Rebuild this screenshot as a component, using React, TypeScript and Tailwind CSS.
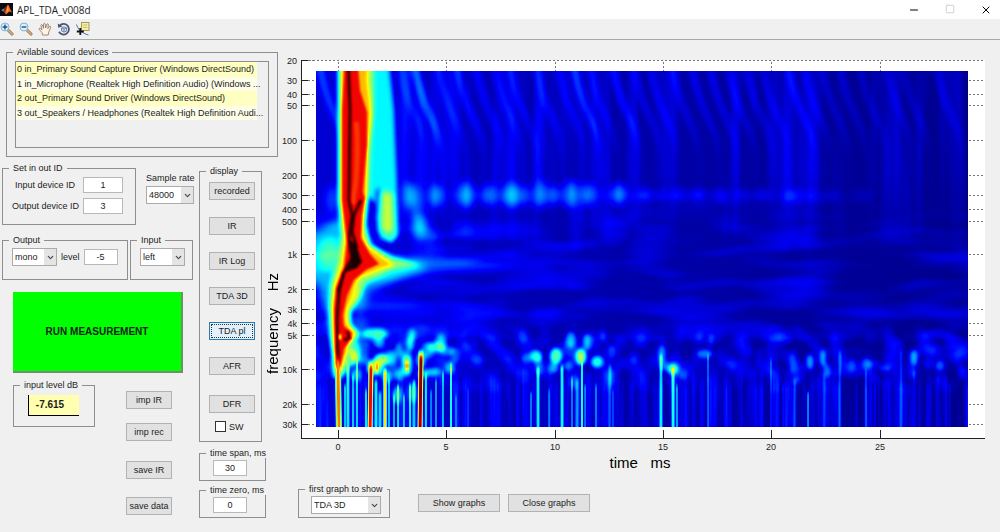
import { useState } from 'react'
import type { ReactNode } from 'react'
import { ChevronDown, Minus, Square, X } from 'lucide-react'

const devices = [
  '0 in_Primary Sound Capture Driver (Windows DirectSound)',
  '1 in_Microphone (Realtek High Definition Audio) (Windows ...',
  '2 out_Primary Sound Driver (Windows DirectSound)',
  '3 out_Speakers / Headphones (Realtek High Definition Audi...',
]

const displayModes = ['recorded', 'IR', 'IR Log', 'TDA 3D', 'TDA pl', 'AFR']

const yTicks: [string, number][] = [
  ['20', 60], ['30', 80], ['40', 94], ['50', 105], ['100', 140], ['200', 175],
  ['300', 195], ['400', 209], ['500', 221], ['1k', 254], ['2k', 289], ['3k', 309],
  ['4k', 323], ['5k', 335], ['10k', 369], ['20k', 404], ['30k', 424],
]

const xTicks: [string, number][] = [
  ['0', 338], ['5', 446], ['10', 555], ['15', 663], ['20', 771], ['25', 880],
]

// Energy streaks that start at the top of the plot: x, strength
const streaks: [number, number][] = [
  [322, 0.12], [402, 0.07], [417, 0.18], [440, 0.08], [459, 0.1], [478, 0.08], [497, 0.08], [512, 0.08],
  [538, 0.08], [560, 0.07], [576, 0.13], [592, 0.07], [615, 0.11], [636, 0.07], [652, 0.07],
  [674, 0.07], [694, 0.08], [712, 0.08], [730, 0.07], [748, 0.07], [764, 0.06], [790, 0.09],
  [806, 0.06], [824, 0.06], [842, 0.06], [862, 0.05], [888, 0.05], [905, 0.05], [938, 0.06],
]

type Spot = [number, number, number, number, number]

// Wide soft spots below 4k: x, y, rx, ry, strength
const lowSpots: Spot[] = [
  // 300 Hz row
  [409, 195, 5, 13, 0.26], [436, 196, 6, 11, 0.24], [466, 195, 7, 13, 0.24], [489, 195, 7, 11, 0.16],
  [512, 195, 9, 12, 0.22], [527, 195, 4, 10, 0.12], [541, 194, 4, 14, 0.23], [554, 195, 6, 10, 0.15],
  [571, 194, 5, 14, 0.24], [588, 194, 6, 11, 0.19], [619, 194, 6, 11, 0.23], [645, 195, 6, 7, 0.13],
  [662, 195, 5, 6, 0.08], [678, 195, 8, 6, 0.1], [698, 195, 8, 6, 0.12], [720, 195, 7, 6, 0.1],
  [742, 195, 8, 5, 0.08], [762, 195, 8, 5, 0.09], [792, 196, 9, 6, 0.11], [812, 196, 8, 5, 0.07],
  [832, 196, 8, 5, 0.06], [862, 196, 12, 5, 0.05], [550, 196, 110, 7, 0.05], [740, 196, 110, 4, 0.03],
  [420, 228, 7, 12, 0.3], [432, 236, 7, 6, 0.14], [416, 205, 6, 18, 0.14], [464, 228, 10, 7, 0.08],
  [428, 252, 18, 5, 0.08], [332, 200, 6, 14, 0.13], [614, 232, 14, 12, 0.06], [655, 232, 18, 8, 0.05],
  [793, 150, 6, 90, 0.05], [576, 215, 6, 35, 0.06], [541, 150, 4, 60, 0.05], [420, 150, 5, 70, 0.08],
  [540, 255, 45, 4, 0.04], [575, 283, 14, 5, 0.05], [545, 314, 18, 4, 0.09], [400, 310, 40, 4, 0.07],
  [440, 314, 40, 5, 0.05], [360, 325, 9, 10, 0.12], [358, 300, 8, 12, 0.2],
]

// Scatter between 4k and 12k
const highSpots: Spot[] = [
  [523, 335, 5, 7, 0.08],
  [375, 334, 13, 5, 0.32], [379, 342, 5, 6, 0.2], [350, 357, 8, 9, 0.35], [355, 352, 6, 11, 0.28],
  [344, 366, 5, 8, 0.3], [366, 350, 4, 8, 0.12], [381, 360, 7, 6, 0.48], [376, 368, 7, 7, 0.42],
  [371, 367, 4, 7, 0.35], [391, 358, 6, 7, 0.22], [399, 350, 4, 7, 0.2], [406, 357, 6, 7, 0.24],
  [407, 366, 5, 10, 0.38], [410, 344, 4, 7, 0.34], [412, 335, 4, 6, 0.28], [421, 360, 4, 8, 0.3],
  [399, 375, 5, 6, 0.22], [397, 395, 4, 9, 0.3], [413, 393, 4, 10, 0.24], [428, 350, 6, 8, 0.22],
  [436, 347, 8, 5, 0.28], [441, 343, 5, 9, 0.22], [447, 351, 7, 5, 0.2], [450, 368, 5, 6, 0.24],
  [433, 372, 8, 4, 0.26], [423, 374, 6, 4, 0.22], [455, 355, 5, 8, 0.16], [387, 377, 5, 6, 0.25],
  [357, 375, 5, 6, 0.2], [364, 360, 5, 4, 0.16], [470, 345, 8, 5, 0.06], [478, 360, 6, 6, 0.06],
  // 10 ms group
  [536, 356, 6, 6, 0.36], [539, 366, 4, 10, 0.2], [526, 358, 5, 5, 0.18], [556, 356, 6, 8, 0.42],
  [554, 368, 5, 5, 0.22], [571, 340, 5, 8, 0.26], [568, 366, 5, 5, 0.2], [581, 357, 5, 8, 0.5],
  [587, 342, 4, 8, 0.24], [597, 362, 6, 6, 0.38], [603, 336, 3, 6, 0.16], [612, 352, 5, 7, 0.14],
  [574, 382, 4, 8, 0.15], [611, 378, 4, 9, 0.12], [634, 358, 5, 6, 0.1],
  // 15 ms group and tail
  [662, 354, 4, 9, 0.24], [673, 369, 5, 5, 0.4], [683, 376, 5, 5, 0.1], [664, 366, 5, 5, 0.16],
  [705, 354, 8, 5, 0.22], [711, 340, 3, 6, 0.16], [700, 338, 4, 6, 0.08], [760, 358, 5, 10, 0.06],
  [732, 363, 5, 8, 0.06], [771, 350, 5, 14, 0.07], [783, 338, 9, 6, 0.09], [793, 362, 4, 12, 0.12],
  [797, 380, 5, 4, 0.14], [810, 362, 4, 8, 0.27], [823, 358, 3, 9, 0.27], [827, 370, 4, 7, 0.16],
  [833, 340, 5, 6, 0.07], [852, 365, 4, 7, 0.13], [867, 363, 5, 6, 0.16], [873, 364, 6, 4, 0.1],
  [885, 368, 6, 4, 0.15], [899, 350, 6, 12, 0.05], [914, 358, 4, 8, 0.26], [912, 372, 4, 6, 0.08],
  [928, 364, 4, 5, 0.1], [940, 366, 5, 6, 0.18], [936, 334, 14, 5, 0.08], [950, 342, 6, 8, 0.07],
  [962, 372, 4, 6, 0.09],
]

// Narrow high frequency lines: x, y start, width, strength
const combs: [number, number, number, number][] = [
  [348, 365, 2, 0.3], [353, 375, 1, 0.2], [357, 360, 1, 0.26], [345, 385, 1, 0.25],
  [366, 390, 1, 0.25], [376, 380, 2, 0.3], [380, 392, 2, 0.26], [389, 380, 1, 0.22],
  [394, 395, 1, 0.24], [398, 385, 1, 0.26], [404, 395, 1, 0.24], [410, 385, 1, 0.28],
  [414, 380, 2, 0.28], [426, 375, 1, 0.24], [431, 390, 1, 0.18], [436, 380, 1, 0.22],
  [443, 372, 1, 0.24], [451, 365, 1, 0.34], [456, 395, 1, 0.12], [468, 390, 1, 0.08],
  [531, 392, 1, 0.2], [538, 368, 2, 0.32], [549, 390, 1, 0.13], [562, 366, 2, 0.34],
  [572, 378, 1, 0.2], [577, 380, 2, 0.16], [582, 362, 1, 0.32], [585, 385, 1, 0.18],
  [596, 385, 1, 0.14], [610, 365, 2, 0.13], [613, 390, 1, 0.12], [661, 355, 2, 0.28],
  [673, 368, 2, 0.34], [677, 385, 1, 0.18], [708, 355, 1, 0.16], [771, 360, 1, 0.1],
  [783, 385, 1, 0.08], [795, 380, 2, 0.11], [808, 392, 1, 0.22], [824, 375, 2, 0.07],
  [840, 352, 2, 0.11], [866, 370, 1, 0.08], [875, 385, 1, 0.08], [901, 350, 2, 0.09],
  [914, 370, 2, 0.09], [938, 375, 2, 0.07], [950, 385, 1, 0.06],
]

const grey = (level: number) => `rgb(${level}, ${level}, ${level})`

function Spectrogram() {
  return (
    <svg viewBox="280 50 720 428" className="block w-full" role="img" aria-label="TDA plot">
      <defs>
        <clipPath id="plot">
          <rect x="316" y="71" width="652" height="356" />
        </clipPath>
        {/* grey level to jet colours, the top of the scale falls to black */}
        <filter id="jet" filterUnits="userSpaceOnUse" x="300" y="60" width="690" height="380" colorInterpolationFilters="sRGB">
          <feComponentTransfer>
            <feFuncR type="table" tableValues="0 0 0 0 .5 1 1 .95 .1" />
            <feFuncG type="table" tableValues="0 0 .5 1 1 1 .45 0 0" />
            <feFuncB type="table" tableValues=".5 1 1 1 .5 0 0 0 0" />
          </feComponentTransfer>
        </filter>
        <filter id="soft1" filterUnits="userSpaceOnUse" x="280" y="40" width="720" height="420" colorInterpolationFilters="sRGB">
          <feGaussianBlur stdDeviation="1" />
        </filter>
        <filter id="soft2" filterUnits="userSpaceOnUse" x="280" y="40" width="720" height="420" colorInterpolationFilters="sRGB">
          <feGaussianBlur stdDeviation="2" />
        </filter>
        <filter id="soft4" filterUnits="userSpaceOnUse" x="280" y="40" width="720" height="420" colorInterpolationFilters="sRGB">
          <feGaussianBlur stdDeviation="4" />
        </filter>
        <filter id="line" filterUnits="userSpaceOnUse" x="280" y="40" width="720" height="420" colorInterpolationFilters="sRGB">
          <feGaussianBlur stdDeviation="0.6 2" />
        </filter>
        <filter id="clouds" filterUnits="userSpaceOnUse" x="316" y="190" width="652" height="200" colorInterpolationFilters="sRGB">
          <feTurbulence type="fractalNoise" baseFrequency="0.012 0.05" numOctaves="2" seed="4" />
          <feColorMatrix values="0 0 0 0 1  0 0 0 0 1  0 0 0 0 1  .24 0 0 0 -.1" />
        </filter>
        <filter id="columns" filterUnits="userSpaceOnUse" x="316" y="71" width="652" height="200" colorInterpolationFilters="sRGB">
          <feTurbulence type="fractalNoise" baseFrequency="0.06 0.003" numOctaves="2" seed="9" />
          <feColorMatrix values="0 0 0 0 1  0 0 0 0 1  0 0 0 0 1  .18 0 0 0 -.075" />
        </filter>
        <filter id="grain" filterUnits="userSpaceOnUse" x="316" y="320" width="652" height="76" colorInterpolationFilters="sRGB">
          <feTurbulence type="fractalNoise" baseFrequency="0.06 0.05" numOctaves="1" seed="3" />
          <feColorMatrix values="0 0 0 0 1  0 0 0 0 1  0 0 0 0 1  .34 0 0 0 -.14" />
        </filter>
        <filter id="comb" filterUnits="userSpaceOnUse" x="316" y="365" width="652" height="62" colorInterpolationFilters="sRGB">
          <feTurbulence type="fractalNoise" baseFrequency="0.2 0.004" numOctaves="2" seed="7" />
          <feColorMatrix values="0 0 0 0 1  0 0 0 0 1  0 0 0 0 1  .28 0 0 0 -.1" />
        </filter>
        <linearGradient id="fade" x1="0" x2="1" y1="0" y2="0">
          <stop offset="0" stopColor="#fff" stopOpacity=".07" />
          <stop offset=".35" stopColor="#fff" stopOpacity=".035" />
          <stop offset="1" stopColor="#fff" stopOpacity="0" />
        </linearGradient>
        <linearGradient id="streak" gradientUnits="userSpaceOnUse" x1="0" x2="0" y1="71" y2="240">
          <stop offset="0" stopColor="#fff" />
          <stop offset=".3" stopColor="#fff" stopOpacity=".7" />
          <stop offset=".5" stopColor="#fff" stopOpacity=".2" />
          <stop offset="1" stopColor="#fff" stopOpacity="0" />
        </linearGradient>
        <linearGradient id="band" x1="0" x2="0" y1="0" y2="1">
          <stop offset="0" stopColor="#000" />
          <stop offset=".25" stopColor="#fff" />
          <stop offset=".7" stopColor="#fff" />
          <stop offset="1" stopColor="#000" />
        </linearGradient>
        <linearGradient id="rise" x1="0" x2="0" y1="0" y2="1">
          <stop offset="0" stopColor="#000" />
          <stop offset=".4" stopColor="#fff" />
        </linearGradient>
        <linearGradient id="fall" x1="0" x2="0" y1="0" y2="1">
          <stop offset=".5" stopColor="#fff" />
          <stop offset="1" stopColor="#000" />
        </linearGradient>
        <mask id="clouds-mask"><rect x="316" y="190" width="652" height="200" fill="url(#band)" /></mask>
        <mask id="grain-mask"><rect x="316" y="320" width="652" height="76" fill="url(#band)" /></mask>
        <mask id="comb-mask"><rect x="316" y="365" width="652" height="62" fill="url(#rise)" /></mask>
        <mask id="columns-mask"><rect x="316" y="71" width="652" height="200" fill="url(#fall)" /></mask>
      </defs>

      <rect x="301" y="60" width="684" height="378" fill="#fff" />

      <g clipPath="url(#plot)">
        <g filter="url(#jet)">
          <rect x="300" y="60" width="690" height="380" fill={grey(4)} />
          <rect x="316" y="71" width="652" height="356" fill="url(#fade)" />
          <g mask="url(#columns-mask)"><rect x="316" y="71" width="652" height="200" filter="url(#columns)" /></g>
          <g mask="url(#clouds-mask)"><rect x="316" y="190" width="652" height="200" filter="url(#clouds)" /></g>
          <g mask="url(#grain-mask)"><rect x="316" y="320" width="652" height="76" filter="url(#grain)" /></g>
          <g mask="url(#comb-mask)"><rect x="316" y="365" width="652" height="62" filter="url(#comb)" /></g>

          <g filter="url(#soft2)" fill="none" stroke="url(#streak)" strokeWidth="8">
            {streaks.map(([x, strength]) => (
              <path
                key={x}
                d={`M${x - 4} 55 C${x} 80 ${x + 4} 98 ${x + 14} 118 S${x + 26} 150 ${x + 27} 220`}
                strokeOpacity={strength}
              />
            ))}
          </g>

          {/* second arrival, next to the main ridge */}
          <g filter="url(#soft2)">
            <path d="M368 55 L388 55 L394 110 L397 180 L398 235 L392 243 L380 238 L376 205 L368 195Z" fill={grey(94)} />
            <path d="M376 195 L386 188 L396 195 L398 236 L390 242 L378 232Z" fill={grey(110)} />
            <path d="M383 192 L391 194 L393 228 L387 234 L382 226Z" fill={grey(145)} />
            <path d="M376 190 L380 188 L378 215 L374 225Z" fill={grey(45)} />
          </g>

          {/* glow before the arrival at 1k */}
          <g filter="url(#soft4)" fill="#fff">
            <path d="M308 235 L345 215 L345 340 L334 345 L326 310 L318 285 L305 280Z" fillOpacity=".24" />
            <ellipse cx="329" cy="254" rx="12" ry="16" fillOpacity=".2" />
            <path d="M355 252 L440 259 L560 266 L440 271 L355 285Z" fillOpacity=".17" />
            <path d="M350 255 L425 263 L425 269 L350 300Z" fillOpacity=".2" />
          </g>

          <g filter="url(#soft2)">
            <path
              d="M338 55 L374 55 L374 100 L371 150 L369 195 L366 225 L371 244 L392 257 L420 265 L392 270 L366 283 L358 300 L351 312 L351 324 L360 334 L352 345 L344 360 L342 378 L334 378 L331 345 L329 310 L330 285 L336 262 L341 235 L338 200Z"
              fill={grey(130)}
            />
            <path
              d="M341 55 L370 55 L368 80 L372 115 L368 150 L368 193 L365 205 L363 235 L368 246 L384 258 L395 265 L382 269 L360 278 L354 290 L348 308 L347 322 L356 334 L348 345 L343 360 L340 375 L335 370 L333 340 L332 305 L334 285 L341 265 L344 240 L341 205Z"
              fill={grey(175)}
            />
          </g>
          <g filter="url(#soft1)">
            <path
              d="M345 55 L357 55 L360 90 L367 112 L367 145 L363 192 L365 198 L362 215 L361 238 L370 254 L379 264 L366 270 L354 280 L347 296 L343 315 L344 326 L352 333 L349 342 L344 349 L341 362 L338 374 L335 350 L334 310 L336 288 L344 268 L347 242 L342 200 L342 110Z"
              fill={grey(222)}
            />
            <path d="M356 122 C358 135 358 150 356 180 C355 192 352 200 354 204" fill="none" stroke={grey(208)} strokeWidth="5" />
            <path
              d="M348 55 L350 110 L349 200 L352 215 L349 240 L352 258 L344 272 L339 292 L337 320 L338 372"
              fill="none"
              stroke={grey(252)}
              strokeWidth="3"
            />
            <path d="M361 200 L354 215 L352 232 L357 248" fill="none" stroke={grey(252)} strokeWidth="3" />
            <path d="M350 240 L356 244 L362 262 L357 268 L346 272 L342 282 L339 300 L337 290 L342 272 L351 264Z" fill={grey(255)} />
            <path d="M347 331 L350 338 L344 340" fill="none" stroke={grey(250)} strokeWidth="3" />
            <ellipse cx="340" cy="337" rx="1" ry="3" fill={grey(110)} />
          </g>

          <g filter="url(#soft4)" fill="#fff">
            {lowSpots.map(([x, y, rx, ry, strength]) => (
              <ellipse key={`${x}-${y}`} cx={x} cy={y} rx={rx} ry={ry} fillOpacity={strength} />
            ))}
          </g>
          <g filter="url(#soft2)" fill="#fff">
            {highSpots.map(([x, y, rx, ry, strength]) => (
              <ellipse key={`${x}-${y}`} cx={x} cy={y} rx={rx} ry={ry} fillOpacity={strength} />
            ))}
          </g>

          <g filter="url(#line)" stroke="#fff">
            {combs.map(([x, y, width, strength]) => (
              <line key={x} x1={x} x2={x} y1={y} y2="435" strokeWidth={width + 1} strokeOpacity={strength} />
            ))}
          </g>
          <g filter="url(#line)">
            <path d="M338 368 L339 435" stroke={grey(125)} strokeWidth="6" />
            <path d="M338 360 L339 435" stroke={grey(190)} strokeWidth="3" />
            <path d="M371 364 L370 435" stroke={grey(140)} strokeWidth="5" />
            <path d="M371 366 L370 435" stroke={grey(222)} strokeWidth="3" />
            <path d="M385 370 L385 435" stroke={grey(165)} strokeWidth="3" />
            <path d="M421 352 L420 435" stroke={grey(150)} strokeWidth="5" />
            <path d="M421 356 L420 435" stroke={grey(238)} strokeWidth="3" />
            <path d="M407 362 L407 370" stroke={grey(180)} strokeWidth="4" />
            <path d="M377 364 L377 371" stroke={grey(185)} strokeWidth="3" />
          </g>
        </g>
      </g>

      {/* axes and grid */}
      <g stroke="#222" fill="none" shapeRendering="crispEdges">
        <path d="M301 60 V438 H985" />
        <path d="M301 60 H985" strokeDasharray="2 2" stroke="#777" />
        {yTicks.map(([label, y]) => (
          <g key={label}>
            <path d={`M301 ${y} H308`} />
            <path d={`M308 ${y} H314`} strokeDasharray="2 2" stroke="#777" />
            <path d={`M969 ${y} H985`} strokeDasharray="2 2" stroke="#777" />
          </g>
        ))}
        {xTicks.map(([label, x]) => (
          <g key={label}>
            <path d={`M${x} 430 V438`} />
            <path d={`M${x} 62 V71`} strokeDasharray="2 2" stroke="#777" />
          </g>
        ))}
      </g>
      <g fill="#222" fontSize="9">
        {yTicks.map(([label, y]) => (
          <text key={label} x="297" y={y + 4} textAnchor="end">{label}</text>
        ))}
        {xTicks.map(([label, x]) => (
          <text key={label} x={x} y="450" textAnchor="middle">{label}</text>
        ))}
      </g>
      <text x="640" y="468" fontSize="15" textAnchor="middle" className="whitespace-pre">{'time   ms'}</text>
    </svg>
  )
}

function Panel({ title, className, children }: { title: string; className: string; children: ReactNode }) {
  return (
    <fieldset className={`min-w-0 border border-[#8e8e8e] ${className}`}>
      <legend className="ml-[6px] px-1 leading-[10px] whitespace-nowrap">{title}</legend>
      {children}
    </fieldset>
  )
}

function PushButton({ children, active, className = 'w-[46px]', onClick }: {
  children: ReactNode
  active?: boolean
  className?: string
  onClick?: () => void
}) {
  return (
    <button
      onClick={onClick}
      className={`h-[18px] border text-center whitespace-nowrap ${className} ${
        active
          ? 'border-[#2a7ab0] bg-[#e1f0fa] outline-1 -outline-offset-3 outline-dotted outline-[#333]'
          : 'border-[#b2b2b2] bg-[#e1e1e1]'
      }`}
    >
      {children}
    </button>
  )
}

function DropDown({ label, options, className }: { label: string; options: string[]; className: string }) {
  return (
    <span className={`relative block h-[18px] border border-[#ababab] bg-white ${className}`}>
      <select aria-label={label} className="block h-4 w-full appearance-none bg-transparent pl-[2px] leading-4">
        {options.map((option) => (
          <option key={option}>{option}</option>
        ))}
      </select>
      <span className="pointer-events-none absolute inset-y-0 right-0 flex w-3 items-center justify-center bg-[#e4e4e4]">
        <ChevronDown className="h-[9px] w-[9px] text-[#444]" strokeWidth={3} />
      </span>
    </span>
  )
}

function NumberField({ label, value, className }: { label: string; value: string; className: string }) {
  return (
    <input
      aria-label={label}
      defaultValue={value}
      className={`block h-4 border border-[#b8b8b8] bg-white text-center ${className}`}
    />
  )
}

function Magnifier({ plus }: { plus?: boolean }) {
  return (
    <svg viewBox="0 0 14 14" className="h-[14px] w-[14px]">
      <path d="M8 8 L12 12" stroke="#8a6a4a" strokeWidth="3" strokeLinecap="round" />
      <path d="M8 8 L12 12" stroke="#e3b27c" strokeWidth="1.6" strokeLinecap="round" />
      <circle cx="5" cy="5" r="4" fill="#d8f0fb" stroke="#86b4d2" />
      <path d={plus ? 'M2.6 5 H7.4 M5 2.6 V7.4' : 'M2.6 5 H7.4'} stroke="#1d4f90" strokeWidth="1.4" />
    </svg>
  )
}

function Toolbar() {
  return (
    <div className="flex h-[21px] items-center gap-[5px] border-b border-[#a8a8a8] bg-[#f0f0f0]">
      <button aria-label="Zoom in"><Magnifier plus /></button>
      <button aria-label="Zoom out"><Magnifier /></button>
      <button aria-label="Pan">
        <svg viewBox="0 0 14 14" className="h-[14px] w-[14px]">
          <path
            d="M4.5 13 L4 10.5 L1 7.3 Q.8 6 2.2 6.4 L4 7.8 L2.8 3.2 Q3.4 2 4.3 3 L5.6 6.2 L5.5 1.8 Q6.4 .6 7.2 1.8 L7.6 6 L9 2 Q10 1.3 10.4 2.5 L9.8 6.6 L11.6 4.4 Q12.8 4 12.7 5.3 L10.8 10 L10.2 13Z"
            fill="#fff3e4"
            stroke="#8b6f5c"
            strokeWidth=".8"
          />
        </svg>
      </button>
      <button aria-label="Rotate 3D">
        <svg viewBox="0 0 14 14" className="h-[14px] w-[14px]" fill="none">
          <path d="M2.6 3.8 A5.3 5.3 0 1 1 2 9.8" stroke="#4a5672" strokeWidth="1.8" />
          <path d="M.8 1.4 L1.2 5.8 L5.4 4.6Z" fill="#4a5672" />
          <path d="M4.6 6 L7 4.8 L9.6 6 V9 L7 10.2 L4.6 9Z M4.6 6 L7 7 L9.6 6 M7 7 V10" fill="#d5e2f5" stroke="#536a9b" strokeWidth=".8" />
        </svg>
      </button>
      <button aria-label="Data cursor">
        <svg viewBox="0 0 14 14" className="h-[14px] w-[14px]" fill="none">
          <rect x="5.5" y=".5" width="7.5" height="8" fill="#f4efaa" stroke="#a59b53" />
          <path d="M7.2 3 H11.2 M7.2 5.4 H11.2" stroke="#b9ad64" strokeWidth=".8" />
          <path d="M.5 2.5 C2 7 5 11 12.5 13" stroke="#496fad" />
          <path d="M4.3 6 V13 M.8 9.5 H7.8" stroke="#111" strokeWidth="1.8" />
        </svg>
      </button>
    </div>
  )
}

function TitleBar() {
  return (
    <header className="flex h-[19px] items-center bg-white font-['Open_Sans','Noto_Sans',sans-serif]">
      <svg viewBox="0 0 13 13" className="h-[13px] w-[13px]">
        <rect width="13" height="13" fill="#0b0b12" />
        <path d="M1 7 L4 5.5 L5.5 7 L3.6 8.8Z" fill="#4e8fc4" />
        <path d="M4 5.5 L8 1.5 L6.5 8 L5 10.5 L3.6 8.8Z" fill="#8f2a13" />
        <path d="M8 1.5 Q9 2 9.7 5 L12 9.5 L9.4 8.5 L6 11.5 L5 10Z" fill="#ee6c25" />
        <path d="M8 1.5 L8.3 7 L6.6 9.3Z" fill="#fbc35b" />
      </svg>
      <h1 className="ml-1 flex-1 text-[10px] leading-none text-[#222]">APL_TDA_v008d</h1>
      <div className="flex gap-2">
        <button aria-label="Minimize" className="flex w-7 justify-center"><Minus className="h-3 w-3 text-black" /></button>
        <button aria-label="Maximize" className="flex w-7 justify-center"><Square className="h-[10px] w-[10px] text-[#c8c8c8]" /></button>
        <button aria-label="Close" className="flex w-7 justify-center"><X className="h-3 w-3 text-black" /></button>
      </div>
    </header>
  )
}

export default function App() {
  const [mode, setMode] = useState('TDA pl')

  return (
    <div className="min-h-screen bg-[#f0f0f0] font-['Liberation_Sans',Arial,sans-serif] text-[9px] leading-[10px] text-[#1c1c1c]">
      <TitleBar />
      <Toolbar />

      <main className="flex items-start">
        <div className="w-[280px] shrink-0 pt-[7px]">
          <Panel title="Avilable sound devices" className="ml-[6px] h-[110px] w-[272px]">
            <div className="mx-2 mt-1 h-[87px] border border-[#8e8e8e]">
              <ul className="grid h-[58px] w-[241px] grid-cols-1 grid-rows-4">
                {devices.map((device) => (
                  <li
                    key={device}
                    className="flex items-center whitespace-nowrap pl-px odd:bg-[#ffffc2] even:bg-[#fdfde8]"
                  >
                    {device}
                  </li>
                ))}
              </ul>
            </div>
          </Panel>

          <div className="flex">
            {/* Measurement settings */}
            <div className="w-[199px] shrink-0 pt-[6px] pl-[2px]">
              <div className="flex gap-[10px]">
                <Panel title="Set in out ID" className="h-[62px] w-[134px]">
                  <div className="grid grid-cols-[68px_40px] items-center gap-x-1 gap-y-[5px] pt-1 pl-2 text-right">
                    <label htmlFor="input-id" className="text-center">Input device ID</label>
                    <input id="input-id" defaultValue="1" className="h-4 w-10 border border-[#b8b8b8] bg-white text-center" />
                    <label htmlFor="output-id">Output device ID</label>
                    <input id="output-id" defaultValue="3" className="h-4 w-10 border border-[#b8b8b8] bg-white text-center" />
                  </div>
                </Panel>
                <div className="pt-[10px]">
                  <p className="mb-[3px]">Sample rate</p>
                  <DropDown label="Sample rate" options={['48000', '44100', '96000']} className="w-12" />
                </div>
              </div>

              <div className="mt-[10px] flex gap-[2px]">
                <Panel title="Output" className="h-[45px] w-[126px]">
                  <div className="flex items-center pt-[3px] pl-[9px]">
                    <DropDown label="Output channel" options={['mono', 'left', 'right']} className="w-[45px]" />
                    <label htmlFor="level" className="mx-1">level</label>
                    <input id="level" defaultValue="-5" className="h-4 w-[34px] border border-[#b8b8b8] bg-white text-center" />
                  </div>
                </Panel>
                <Panel title="Input" className="h-[45px] w-[63px]">
                  <div className="pt-[3px] pl-[9px]">
                    <DropDown label="Input channel" options={['left', 'right']} className="w-[45px]" />
                  </div>
                </Panel>
              </div>

              <div className="pl-[11px]">
                <button className="mt-3 block h-[81px] w-[170px] border-r-2 border-b-2 border-[#6f8f6f] bg-[#00ff00] text-[10px] font-bold">
                  RUN MEASUREMENT
                </button>

                <div className="mt-[7px] flex items-start gap-[31px]">
                  <Panel title="input level dB" className="h-[47px] w-[82px]">
                    <output className="mt-[5px] ml-[14px] flex h-[21px] w-[51px] items-center justify-center border-b border-l border-black bg-[#ffffaf] pr-2 text-[10px] font-bold">
                      -7.615
                    </output>
                  </Panel>
                  <div className="flex flex-col gap-5 pt-[11px]">
                    <div className="flex flex-col gap-[14px]">
                      <PushButton>imp IR</PushButton>
                      <PushButton>imp rec</PushButton>
                    </div>
                    <div className="flex flex-col gap-[18px]">
                      <PushButton>save IR</PushButton>
                      <PushButton>save data</PushButton>
                    </div>
                  </div>
                </div>
              </div>
            </div>

            {/* Display modes */}
            <div className="w-[67px] shrink-0 pt-[9px]">
              <Panel title="display" className="h-[276px] w-[63px]">
                <div className="flex flex-col gap-[17px] px-[9px] pt-[6px]">
                  {displayModes.map((name) => (
                    <PushButton key={name} active={mode === name} onClick={() => setMode(name)}>
                      {name}
                    </PushButton>
                  ))}
                </div>
                <div className="px-[9px] pt-5">
                  <PushButton active={mode === 'DFR'} onClick={() => setMode('DFR')}>DFR</PushButton>
                </div>
                <label className="mt-2 flex items-center gap-[3px] pl-[15px]">
                  <input type="checkbox" className="h-[11px] w-[11px] appearance-none border border-[#333] bg-white checked:bg-[#333]" />
                  SW
                </label>
              </Panel>
              <Panel title="time span, ms" className="mt-[6px] h-[33px]">
                <NumberField label="time span, ms" value="30" className="ml-[13px] mt-[2px] w-[34px]" />
              </Panel>
              <Panel title="time zero, ms" className="mt-1 h-[33px]">
                <NumberField label="time zero, ms" value="0" className="ml-[13px] mt-[2px] w-[34px]" />
              </Panel>
            </div>

            <div className="rotate-180 self-start pb-[116px] text-[15px] leading-[14px] whitespace-pre text-black [writing-mode:vertical-rl]">
              {'frequency    Hz'}
            </div>
          </div>
        </div>

        {/* Plot */}
        <section className="min-w-0 flex-1 pt-[10px]">
          <Spectrogram />
          <div className="flex items-start pt-[6px] pl-[18px]">
            <Panel title="first graph to show" className="h-[34px] w-[92px]">
              <div className="pt-[2px] pl-3">
                <DropDown label="first graph to show" options={['TDA 3D', 'TDA pl', 'IR', 'AFR']} className="w-[70px]" />
              </div>
            </Panel>
            <div className="flex gap-2 pt-[10px] pl-7">
              <PushButton className="w-[82px]">Show graphs</PushButton>
              <PushButton className="w-[82px]">Close graphs</PushButton>
            </div>
          </div>
        </section>
      </main>
    </div>
  )
}
